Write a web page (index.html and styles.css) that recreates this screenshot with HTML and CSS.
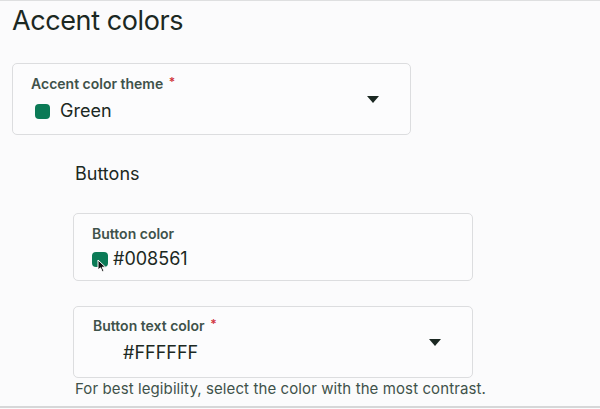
FILE: index.html
```html
<!DOCTYPE html>
<html>
<head>
<meta charset="utf-8">
<link rel="stylesheet" href="styles.css">
</head>
<body>
<div class="page">
  <h1 class="title">Accent colors</h1>
  <div class="field theme">
    <div class="field-body">
      <div class="label">Accent color theme <span class="req">*</span></div>
      <div class="value"><span class="swatch"></span>Green</div>
    </div>
    <span class="caret"></span>
  </div>
  <div class="section">
    <div class="section-title">Buttons</div>
    <div class="field color">
      <div class="field-body">
        <div class="label">Button color</div>
        <div class="value"><span class="swatch swatch-sm"><svg class="cursor" width="10" height="14" viewBox="0 0 10 14"><path d="M1 1 L1 11 L3.5 8.8 L5.3 12.8 L7 12 L5.2 8.2 L8.6 8.2 Z" fill="#111" stroke="#fff" stroke-width="1"/></svg></span>#008561</div>
      </div>
    </div>
    <div class="field textcolor">
      <div class="field-body">
        <div class="label">Button text color <span class="req">*</span></div>
        <div class="value value-indent">#FFFFFF</div>
      </div>
      <span class="caret"></span>
    </div>
    <div class="help">For best legibility, select the color with the most contrast.</div>
  </div>
</div>
</body>
</html>
```
FILE: styles.css
```css
html, body {
  margin: 0;
  padding: 0;
}
body {
  background: #fbfbfc;
  font-family: "Inter", "Liberation Sans", sans-serif;
  color: #1e2a25;
  width: 600px;
  height: 409px;
  overflow: hidden;
}
.page {
  border-top: 1px solid #dedfe0;
  border-bottom: 2px solid #d6d7d8;
  height: 408px;
  box-sizing: border-box;
  padding: 0 12px;
}
.title {
  margin: 0;
  font-weight: 400;
  font-size: 27px;
  line-height: 34px;
  padding-top: 3px;
  letter-spacing: -0.4px;
  color: #1b2822;
}
.field {
  border: 1px solid #dcdddf;
  border-radius: 5px;
  background: #fcfcfd;
  display: flex;
  align-items: center;
  box-sizing: border-box;
}
.theme {
  margin-top: 25px;
  width: 399px;
  height: 72px;
  padding: 0 31px 0 18px;
}
.field-body {
  flex: 1;
  align-self: stretch;
  padding-top: 11px;
}
.label {
  font-size: 14px;
  font-weight: 600;
  color: #3f524a;
  line-height: 18px;
}
.req {
  color: #d1343e;
  font-size: 12px;
  vertical-align: top;
  line-height: 14px;
  margin-left: 2px;
}
.value {
  display: flex;
  align-items: center;
  font-size: 18px;
  line-height: 22px;
  margin-top: 7px;
  color: #1b2822;
}
.swatch {
  width: 15px;
  height: 15px;
  border-radius: 4px;
  background: #0b7a56;
  margin: 0 10px 0 4px;
  position: relative;
}
.swatch-sm {
  width: 16px;
  height: 15px;
  margin: 0 5px 0 0;
}
.cursor {
  position: absolute;
  left: 5px;
  top: 7px;
}
.caret {
  width: 0;
  height: 0;
  border-left: 6px solid transparent;
  border-right: 6px solid transparent;
  border-top: 7px solid #1b2822;
}
.section {
  padding-left: 61px;
}
.section-title {
  margin-top: 28px;
  padding-left: 2px;
  font-size: 18px;
  line-height: 22px;
  color: #1b2822;
}
.color {
  margin-top: 28px;
  width: 400px;
  height: 68px;
  padding: 0 18px;
}
.color .field-body {
  padding-top: 11px;
}
.color .value {
  margin-top: 5px;
}
.textcolor {
  margin-top: 25px;
  width: 400px;
  height: 72px;
  padding: 0 31px 0 19px;
}
.textcolor .field-body {
  padding-top: 10px;
}
.value-indent {
  padding-left: 30px;
  margin-top: 7px;
}
.help {
  font-size: 15px;
  color: #3f524a;
  line-height: 18px;
  padding-left: 2px;
  margin-top: 2px;
  letter-spacing: 0.1px;
}
```
